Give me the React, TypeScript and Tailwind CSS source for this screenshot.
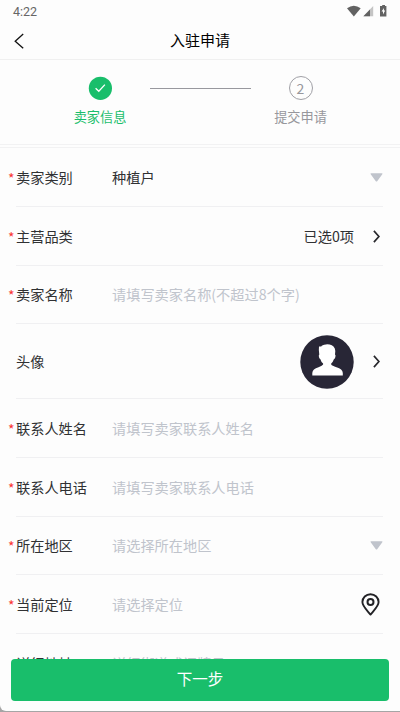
import React from "react";

type Field = {
  label: string;
  required?: boolean;
  value?: string;
  placeholder?: string;
  kind?: "input" | "select" | "link" | "avatar" | "location";
};

const FIELDS: Field[] = [
  { label: "卖家类别", required: true, value: "种植户", kind: "select" },
  { label: "主营品类", required: true, value: "已选0项", kind: "link" },
  { label: "卖家名称", required: true, placeholder: "请填写卖家名称(不超过8个字)" },
  { label: "头像", kind: "avatar" },
  { label: "联系人姓名", required: true, placeholder: "请填写卖家联系人姓名" },
  { label: "联系人电话", required: true, placeholder: "请填写卖家联系人电话" },
  { label: "所在地区", required: true, placeholder: "请选择所在地区", kind: "select" },
  { label: "当前定位", required: true, placeholder: "请选择定位", kind: "location" },
  { label: "详细地址", placeholder: "详细街道或门牌号" },
];

function ChevronRight() {
  return (
    <svg className="ml-[19px] mr-[3px] mt-px h-[13px] w-[7px] shrink-0" viewBox="0 0 7 13" fill="none">
      <path d="M0.9 0.9L5.9 6.5L0.9 12.1" stroke="#28282c" strokeWidth="1.7" />
    </svg>
  );
}

function Caret() {
  return (
    <svg className="mt-px h-[9px] w-[13px] shrink-0" viewBox="0 0 13 9">
      <path d="M1.2 0.3H11.8Q13 0.3 12.3 1.2L7.2 8.2Q6.5 9 5.8 8.2L0.7 1.2Q0 0.3 1.2 0.3Z" fill="#c0c4cc" />
    </svg>
  );
}

function Avatar() {
  return (
    <svg className="mt-px h-[54px] w-[54px] shrink-0" viewBox="0 0 54 54">
      <circle cx="27" cy="27" r="26.7" fill="#282636" />
      <path
        d="M19 11.6L21.2 11.5Q22 9.6 26 9.4Q32.5 9 34.8 13.5Q35.7 15.5 35 19.6Q36 20.2 35.3 22.3Q35 24 33.9 24.3Q33 27 31.2 28.6V29.6Q32 31 36.5 32.2Q42.5 33.8 42.8 38V40.6H12.3V38Q12.6 33.8 18.5 32.2Q22.5 31 23.1 29.6V28.6Q21 26.8 20.4 24.3Q19.4 24 19 22.3Q18.4 20.3 19.3 19.6Q18.5 15.5 19 11.6Z"
        fill="#fff"
      />
    </svg>
  );
}

function LocationPin() {
  return (
    <svg className="mr-[3px] h-[23px] w-[19px] shrink-0" viewBox="0 0 19 23" fill="none" stroke="#222226">
      <path d="M9.5 21.6C6.2 17.6 1.4 13.3 1.4 9.1C1.4 4.6 5 1.2 9.5 1.2S17.6 4.6 17.6 9.1C17.6 13.3 12.8 17.6 9.5 21.6Z" strokeWidth="1.9" strokeLinejoin="round" />
      <circle cx="9.5" cy="8.9" r="3" strokeWidth="2" />
    </svg>
  );
}

function StatusBar() {
  return (
    <div className="flex h-[22px] shrink-0 items-center justify-between px-[13px]">
      <span className="mt-0.5 font-['Roboto',sans-serif] text-[12.5px] leading-none text-[#666]">4:22</span>
      <svg className="h-[12px] w-[40px]" viewBox="0 0 40 12" fill="#626262">
        <path d="M0 3.2Q6.8 -1.8 13.7 3.2L6.85 11.4Z" />
        <path d="M26.2 1V11.3H16.4Z" fill="#c4c4c4" />
        <path d="M23 4.4V11.3H16.4Z" />
        <path d="M34.6 1H35.2V0H38V1H39.4V11.6H33V1Z" />
        <path d="M36.9 2.9L34.6 6.6H36V9.4L38.2 5.6H36.9Z" fill="#fff" />
      </svg>
    </div>
  );
}

function Steps() {
  return (
    <div className="flex h-[84px] shrink-0 items-start justify-center pt-4 text-[13.2px]">
      <div className="flex w-[100px] flex-col items-center text-[#19be6b]">
        <svg className="h-6 w-6" viewBox="0 0 24 24" fill="none">
          <circle cx="12.4" cy="12.3" r="11.6" fill="#19be6b" />
          <path d="M7.6 12.2L10.8 15.3L16.9 8.6" stroke="#fff" strokeWidth="1.3" />
        </svg>
        <span className="ml-px mt-[7px] leading-5">卖家信息</span>
      </div>
      <div className="mt-3 h-px w-[101px] bg-[#98989e]" />
      <div className="flex w-[100px] flex-col items-center text-[#97979c]">
        <div className="flex h-6 w-6 items-center justify-center rounded-full border border-[#a0a0a6] text-[14px] leading-none">
          2
        </div>
        <span className="mt-[7px] leading-5">提交申请</span>
      </div>
    </div>
  );
}

function FieldRow({ field }: { field: Field }) {
  const { label, required, value, placeholder, kind = "input" } = field;

  return (
    <div
      className={[
        "ml-4 mr-[17px] flex shrink-0 items-center border-b border-[#f0f0f2] text-[14.2px] leading-5",
        kind === "avatar" ? "h-[75px]" : "h-[58.7px]",
      ].join(" ")}
    >
      <div className="relative w-24 shrink-0 text-[#303133]">
        {required && <span className="absolute -left-[8px] top-[1px] text-[14px] text-[#fa3534]">*</span>}
        {label}
      </div>

      <div
        className={[
          "flex-1 whitespace-nowrap",
          kind === "link" ? "text-right" : "",
          value ? "text-[#303133]" : "text-[#c0c4cc]",
        ].join(" ")}
      >
        {value ?? placeholder}
      </div>

      {kind === "avatar" && <Avatar />}
      {(kind === "link" || kind === "avatar") && <ChevronRight />}
      {kind === "select" && <Caret />}
      {kind === "location" && <LocationPin />}
    </div>
  );
}

export default function App() {
  return (
    <div className="h-[712px] w-[400px] overflow-hidden bg-[#a5a5a5] font-['Noto_Sans_CJK_SC',sans-serif]">
      <div className="relative flex h-[711px] flex-col overflow-hidden rounded-bl-[6px] bg-[#fdfdfd]">
        <StatusBar />

        <header className="grid h-[38px] shrink-0 grid-cols-3 items-center border-b border-[#f0f0f0]">
          <svg className="ml-[14px] h-[16px] w-[10px]" viewBox="0 0 10 16" fill="none">
            <path d="M9.2 0.9L1.2 8.2L9.2 15.3" stroke="#111" strokeWidth="1.3" />
          </svg>
          <h1 className="pb-px text-center text-[15px] leading-5 text-black">入驻申请</h1>
        </header>

        <Steps />
        <div className="h-[4px] shrink-0 border-y border-[#f2f2f3]" />

        <div className="flex flex-1 flex-col overflow-hidden pt-[0.2px]">
          {FIELDS.map((f) => (
            <FieldRow key={f.label} field={f} />
          ))}
        </div>

        {/* fixed submit button */}
        <button
          type="button"
          className="absolute bottom-[10px] left-[11px] h-[42.5px] w-[378px] rounded-[4px] bg-[#19be6b] pb-[2px] text-[15.5px] leading-none text-white"
        >
          下一步
        </button>
      </div>
    </div>
  );
}
